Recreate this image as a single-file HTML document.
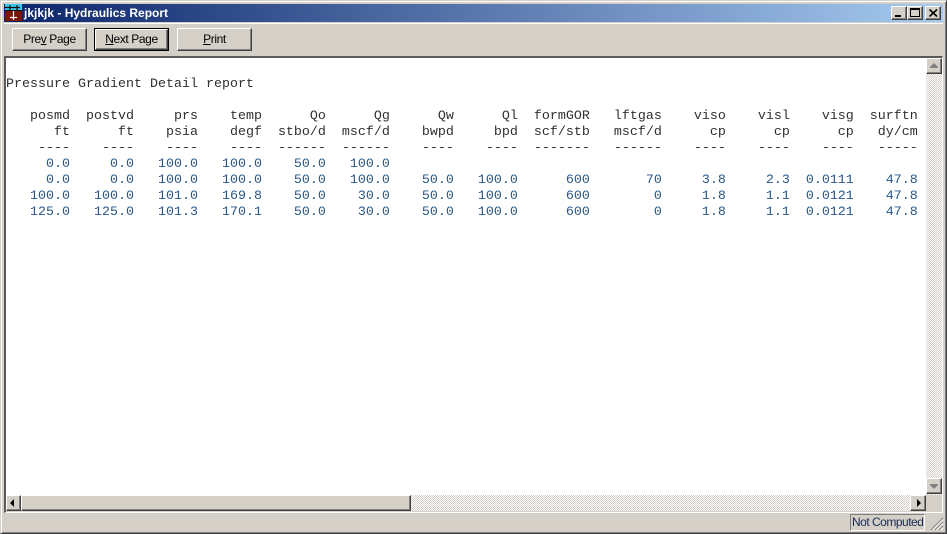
<!DOCTYPE html>
<html><head><meta charset="utf-8"><style>
html,body{margin:0;padding:0;background:#d4d0c8;width:947px;height:534px;overflow:hidden}
.a{position:absolute;box-sizing:border-box}
.raised{background:#d4d0c8;border:1px solid;border-color:#fff #404040 #404040 #fff;box-shadow:inset -1px -1px 0 #808080}
.btn{font:12px "Liberation Sans",sans-serif;letter-spacing:-.4px;color:#000;text-align:center;line-height:21px;top:28px;height:23px}
.track{background-color:#fff;background-image:conic-gradient(#d4d0c8 25%,#fff 0 50%,#d4d0c8 0 75%,#fff 0);background-size:2px 2px}
pre{position:absolute;margin:0;left:6px;top:77px;font:13.33px/16px "Liberation Mono",monospace;color:#2e3034;white-space:pre}
pre span{color:#2a5688}
u{text-decoration:underline}
</style></head><body>
<div class="a" style="left:0;top:0;width:947px;height:534px;border:1px solid;border-color:#d4d0c8 #404040 #404040 #d4d0c8;box-shadow:inset 1px 1px 0 #fff,inset -1px -1px 0 #808080"></div>
<div class="a" style="left:4px;top:4px;width:939px;height:18px;background:linear-gradient(90deg,#0a246a,#a6caf0)"></div>
<svg class="a" style="left:5px;top:4px" width="17" height="17" viewBox="0 0 17 17"><rect width="17" height="17" fill="#7a1508"/><rect width="17" height="6" fill="#35c8f0"/><rect y="6" width="17" height="1" fill="#111"/><path d="M0 3.5H15M5 1V6M12 1V6" stroke="#111" stroke-width="1.2"/><path d="M8.5 7V16M5 13.5H12" stroke="#fff" stroke-width="1.2"/></svg>
<div class="a" style="left:24px;top:5px;font:bold 12px/17px 'Liberation Sans',sans-serif;color:#fff;white-space:nowrap">jkjkjk - Hydraulics Report</div>
<div class="a raised" style="left:891px;top:6px;width:16px;height:14px"><div class="a" style="left:3px;top:8px;width:6px;height:2px;background:#000"></div></div>
<div class="a raised" style="left:907px;top:6px;width:16px;height:14px"><div class="a" style="left:2px;top:1px;width:10px;height:9px;border:1px solid #000;border-top-width:2px"></div></div>
<div class="a raised" style="left:925px;top:6px;width:16px;height:14px"><svg class="a" style="left:3px;top:2px" width="9" height="8"><path d="M0.5 0.5L8 7.5M8 0.5L0.5 7.5" stroke="#000" stroke-width="1.6"/></svg></div>
<div class="a" style="left:4px;top:23px;width:939px;height:1px;background:#fff"></div>
<div class="a raised btn" style="left:12px;width:75px">Pre<u>v</u> Page</div>
<div class="a" style="left:94px;top:28px;width:75px;height:23px;background:#000;padding:1px"><div class="raised btn" style="box-sizing:border-box;height:21px;line-height:19px"><u>N</u>ext Page</div></div>
<div class="a raised btn" style="left:177px;width:75px"><u>P</u>rint</div>
<div class="a" style="left:4px;top:56px;width:939px;height:457px;border:2px solid;border-color:#5a5a5a #fff #fff #5a5a5a;border-right-width:1px;border-bottom-width:1px"></div>
<div class="a" style="left:6px;top:58px;width:920px;height:437px;background:#fff"></div>
<pre>Pressure Gradient Detail report

   posmd  postvd     prs    temp      Qo      Qg      Qw      Ql  formGOR   lftgas    viso    visl    visg  surftn
      ft      ft    psia    degf  stbo/d  mscf/d    bwpd     bpd  scf/stb   mscf/d      cp      cp      cp   dy/cm
    ----    ----    ----    ----  ------  ------    ----    ----  -------   ------    ----    ----    ----   -----
<span>     0.0     0.0   100.0   100.0    50.0   100.0
     0.0     0.0   100.0   100.0    50.0   100.0    50.0   100.0      600       70     3.8     2.3  0.0111    47.8
   100.0   100.0   101.0   169.8    50.0    30.0    50.0   100.0      600        0     1.8     1.1  0.0121    47.8
   125.0   125.0   101.3   170.1    50.0    30.0    50.0   100.0      600        0     1.8     1.1  0.0121    47.8</span></pre>
<div class="a track" style="left:926px;top:58px;width:16px;height:437px"></div>
<div class="a raised" style="left:926px;top:58px;width:16px;height:16px"><div class="a" style="left:3px;top:4px;border:4px solid transparent;border-top:0;border-bottom:4px solid #808080"></div><div class="a" style="left:3px;top:8px;width:8px;height:1px;background:#808080"></div></div>
<div class="a raised" style="left:926px;top:478px;width:16px;height:16px"><div class="a" style="left:3px;top:5px;width:8px;height:1px;background:#808080"></div><div class="a" style="left:3px;top:6px;border:4px solid transparent;border-bottom:0;border-top:4px solid #808080"></div></div>
<div class="a track" style="left:6px;top:495px;width:920px;height:16px"></div>
<div class="a raised" style="left:6px;top:495px;width:15px;height:16px"><div class="a" style="left:3px;top:3px;border:4px solid transparent;border-left:0;border-right:4px solid #000"></div></div>
<div class="a raised" style="left:21px;top:495px;width:390px;height:16px"></div>
<div class="a raised" style="left:910px;top:495px;width:16px;height:16px"><div class="a" style="left:6px;top:3px;border:4px solid transparent;border-right:0;border-left:4px solid #000"></div></div>
<div class="a" style="left:850px;top:514px;width:75px;height:17px;border:1px solid;border-color:#808080 #fff #fff #808080;font:12px/15px 'Liberation Sans',sans-serif;letter-spacing:-.5px;color:#1a2a55;white-space:nowrap;padding-left:1px;overflow:hidden">Not Computed</div>
<svg class="a" style="left:930px;top:517px" width="14" height="14"><path d="M13 1L1 13M13 5L5 13M13 9L9 13" stroke="#808080" stroke-width="1.2"/><path d="M13 2.5L2.5 13M13 6.5L6.5 13M13 10.5L10.5 13" stroke="#fff" stroke-width="1"/></svg>
</body></html>
